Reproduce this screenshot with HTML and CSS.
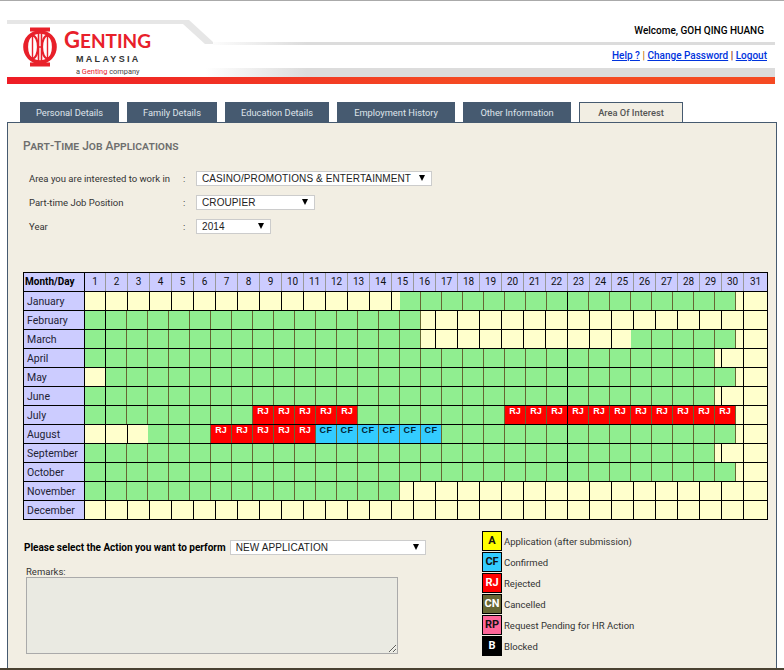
FILE: index.html
```html
<!DOCTYPE html>
<html lang="en">
<head>
  <meta charset="UTF-8">
  <meta name="viewport" content="width=device-width, initial-scale=1.0">
  <title>Part-Time Job Applications</title>
  <link rel="stylesheet" href="styles.css">
</head>
<body>
  <header class="masthead">
    <svg class="swoosh" width="768" height="76" viewBox="0 0 768 76" aria-hidden="true">
      <defs>
        <linearGradient id="fade" gradientUnits="userSpaceOnUse" x1="198" y1="0" x2="300" y2="0">
          <stop offset="0" stop-color="#fff"/>
          <stop offset="1" stop-color="#dcdcdc"/>
        </linearGradient>
      </defs>
      <polygon points="0,19 182,19 206,41 206,43 198,43 176,23 0,23" fill="#e6e6e6"/>
      <rect x="206" y="41" width="562" height="3" fill="url(#fade)"/>
      <rect x="198" y="67" width="570" height="9" fill="url(#fade)"/>
    </svg>
    <div class="masthead-top">
      <div class="logo">
        <svg class="logo-mark" width="36" height="40" viewBox="0 0 36 40" aria-hidden="true">
          <g fill="none" stroke="#e8202a">
            <circle cx="18" cy="20" r="15" stroke-width="3.600"/>
            <ellipse cx="10.500" cy="20" rx="5.500" ry="11.500" stroke-width="2.200"/>
            <ellipse cx="25.500" cy="20" rx="5.500" ry="11.500" stroke-width="2.200"/>
            <path d="M10.500 9v22M25.500 9v22" stroke-width="1.400"/>
            <path d="M16.500 6v28M19.500 6v28M16 20h4" stroke-width="1.600"/>
            <path d="M8 2.500h20M8 37.500h20" stroke-width="4"/>
          </g>
        </svg>
        <div class="logo-words">
          <div class="logo-name">GENTING</div>
          <div class="logo-sub">MALAYSIA</div>
          <div class="logo-tag">a <span>Genting</span> company</div>
        </div>
      </div>
      <div class="user">
        <div class="welcome">Welcome, GOH QING HUANG</div>
        <div class="user-links">
          <a href="#">Help ?</a> <span class="sep-a">|</span> <a href="#">Change Password</a> <span class="sep-b">|</span> <a href="#">Logout</a>
        </div>
      </div>
    </div>
    <div class="redbar"></div>
  </header>

  <nav class="tabs">
    <a href="#" class="tab">Personal Details</a>
    <a href="#" class="tab">Family Details</a>
    <a href="#" class="tab">Education Details</a>
    <a href="#" class="tab">Employment History</a>
    <a href="#" class="tab">Other Information</a>
    <a href="#" class="tab active">Area Of Interest</a>
  </nav>

  <main class="panel">
    <h2>Part-Time Job Applications</h2>

    <div class="fields">
      <label>Area you are interested to work in</label><span>:</span>
      <div class="pick pick-area"><select><option>CASINO/PROMOTIONS &amp; ENTERTAINMENT</option></select></div>
      <label>Part-time Job Position</label><span>:</span>
      <div class="pick pick-job"><select><option>CROUPIER</option></select></div>
      <label>Year</label><span>:</span>
      <div class="pick pick-year"><select><option>2014</option></select></div>
    </div>

    <div class="calendar" id="calendar"></div>

    <div class="foot">
      <div class="action">
        <div class="action-row">
          <b>Please select the Action you want to perform</b>
          <div class="pick pick-action"><select><option>NEW APPLICATION</option></select></div>
        </div>
        <label class="remarks-label">Remarks:</label>
        <textarea class="remarks" readonly></textarea>
      </div>
      <ul class="legend">
        <li><span class="key key-a">A</span>Application (after submission)</li>
        <li><span class="key key-cf">CF</span>Confirmed</li>
        <li><span class="key key-rj">RJ</span>Rejected</li>
        <li><span class="key key-cn">CN</span>Cancelled</li>
        <li><span class="key key-rp">RP</span>Request Pending for HR Action</li>
        <li><span class="key key-b">B</span>Blocked</li>
      </ul>
    </div>
  </main>
  <div class="bottom-strip"></div>
  <script src="grid.js"></script>
</body>
</html>
```

FILE: styles.css
```css
* {
  box-sizing: border-box;
}
html, body {
  height: 670px;
  overflow: hidden;
}
body {
  margin: 0;
  background: #fff;
  border-top: 1px solid #aaa;
  font-family: Roboto, Arial, sans-serif;
  font-size: 9.5px;
  color: #333;
}

/* header */
.masthead {
  position: relative;
  width: 768px;
  height: 83px;
  margin-left: 7px;
}
.swoosh {
  position: absolute;
  left: 0;
  top: 0;
}
.masthead-top {
  position: relative;
  height: 76px;
  display: flex;
  justify-content: space-between;
}
.logo {
  display: flex;
  padding: 26px 0 0 15px;
  height: 76px;
}
.logo-mark {
  margin-right: 6px;
}
.logo-words {
  padding-top: 3px;
}
.logo-name {
  font-family: Lato, Arial, sans-serif;
  font-weight: bold;
  font-size: 19px;
  line-height: 20px;
  color: #e8202a;
}
.logo-name::first-letter {
  font-size: 22px;
}
.logo-sub {
  font-family: 'Liberation Sans', Arial, sans-serif;
  font-weight: bold;
  font-size: 9px;
  letter-spacing: 2.3px;
  color: #333;
  margin: 3px 0 0 12px;
  line-height: 10px;
}
.logo-tag {
  font-size: 7.400px;
  margin: 3px 0 0 12px;
  line-height: 10px;
  color: #444;
}
.logo-tag span {
  color: #e8202a;
}
.user {
  width: 200px;
  text-align: right;
  padding: 23px 8px 0 0;
  font-size: 10px;
}
.welcome {
  font-weight: 500;
  color: #000;
  line-height: 14px;
  padding-right: 3px;
}
.user-links {
  margin-top: 11px;
  line-height: 14px;
  font-weight: 500;
}
.user-links a {
  color: #0033dd;
}
.sep-a {
  color: #c07000;
}
.sep-b {
  color: #800000;
}
.redbar {
  height: 7px;
  background: linear-gradient(to right, #ee1c25, #f54a23 60%);
}

/* tabs */
.tabs {
  display: grid;
  grid-template-columns: 99px 90px 104px 118px 108px 104px;
  column-gap: 8px;
  margin: 18px 0 0 20px;
}
.tab {
  height: 20px;
  line-height: 21px;
  text-align: center;
  text-decoration: none;
  font-size: 9.300px;
  background: #465a70;
  color: #dfe4ea;
}
.tab.active {
  background: #f2eee3;
  color: #555;
  font-weight: 500;
  border: 1px solid #465a70;
  border-bottom: 0;
  line-height: 19px;
}

/* panel */
.panel {
  width: 770px;
  height: 546px;
  margin-left: 7px;
  padding: 0 0 0 15px;
  background: #f2eee3;
  border: 1px solid #465a70;
  border-width: 1px 1px 0 1px;
}
h2 {
  margin: 0;
  padding-top: 15px;
  font-size: 12px;
  line-height: 16px;
  font-weight: 500;
  font-variant: small-caps;
  color: #6e6e6e;
}
.fields {
  display: grid;
  grid-template-columns: 154px 13px 1fr;
  grid-auto-rows: 15px;
  row-gap: 9px;
  align-items: center;
  margin: 17px 0 0 6px;
}
.fields label {
  white-space: nowrap;
}
.pick {
  position: relative;
  height: 15px;
}
.pick select {
  appearance: none;
  display: block;
  width: 100%;
  height: 100%;
  padding: 0 0 0 5px;
  border: 1px solid #ccc;
  border-radius: 0;
  background: #fff;
  color: #222;
  font-family: 'Liberation Sans', Arial, sans-serif;
  font-size: 10px;
  letter-spacing: 0.1px;
}
.pick::after {
  content: '';
  position: absolute;
  right: 7px;
  top: 4px;
  border-style: solid;
  border-width: 6px 3.5px 0 3.5px;
  border-color: #000 transparent transparent transparent;
}
.pick-area {
  width: 236px;
}
.pick-job {
  width: 119px;
}
.pick-year {
  width: 75px;
}
.pick-action {
  width: 196px;
}

/* calendar */
.calendar {
  width: 745px;
  margin-top: 38px;
  border-top: 1px solid #000;
  border-left: 1px solid #000;
  border-right: 1px solid #000;
  color: #111;
}
.cal-row {
  display: flex;
  height: 19px;
  border-bottom: 1px solid #000;
}
.cal-month {
  width: 61px;
  flex: none;
  padding-left: 3px;
  font-size: 10.500px;
  line-height: 20px;
  background: #ccccff;
  border-right: 1px solid #000;
  color: #223;
}
.cal-head .cal-month {
  font-size: 10px;
  font-weight: bold;
  padding-left: 1px;
  color: #000;
  line-height: 17px;
}
.cell {
  flex: none;
  height: 18px;
  border-right: 1px solid #000;
  text-align: center;
  font-family: 'Liberation Sans', Arial, sans-serif;
  font-weight: bold;
  font-size: 9px;
  line-height: 10px;
}
.cell.free {
  background: #ffffcc;
}
.cell.blank {
  border-right: 0;
}
.cell.open {
  background: #90ee90;
  border-right-color: #666633;
}
.cell.rj {
  background: #ff0000;
  border-right-color: #666633;
  color: #fff;
}
.cell.cf {
  background: #33ccff;
  border-right-color: #666633;
  color: #023;
  letter-spacing: 0.5px;
}
.cell.edge {
  border-right-color: #000;
}
.cell.day {
  background: #ccccff;
  border-right-color: #999;
  font-family: Roboto, Arial, sans-serif;
  font-weight: normal;
  font-size: 10px;
  line-height: 17px;
  color: #111;
}
.cell.last {
  border-right: 0;
}

/* bottom part */
.foot {
  display: flex;
  margin-top: 11px;
}
.action {
  width: 459px;
  padding: 9px 0 0 1px;
}
.action-row {
  display: flex;
  align-items: center;
}
.action-row b {
  color: #000;
  margin-right: 4px;
  font-size: 10px;
  font-weight: bold;
  white-space: nowrap;
}
.remarks-label {
  display: block;
  margin: 12px 0 0 2px;
  line-height: 10px;
}
.remarks {
  display: block;
  width: 372px;
  height: 77px;
  margin: 0 0 0 2px;
  background: #eaeae2;
  border: 1px solid #aaa;
  outline: 0;
}
.legend {
  list-style: none;
  margin: 0;
  padding: 0;
}
.legend li {
  display: flex;
  align-items: center;
  height: 20px;
  margin-bottom: 1px;
}
.key {
  width: 20px;
  height: 20px;
  margin-right: 2px;
  border: 1px solid #000;
  text-align: center;
  font-size: 11px;
  font-weight: bold;
  line-height: 18px;
  color: #111;
}
.key-a { background: #ffff00; }
.key-cf { background: #33ccff; }
.key-rj { background: #ff0000; color: #fff; }
.key-cn { background: #666633; color: #fff; }
.key-rp { background: #ff6699; }
.key-b { background: #000; color: #fff; }

.bottom-strip {
  height: 2px;
  background: #4a4232;
}
```

FILE: grid.js
```js
// one row per month: [kind, count]
// y = free cell (runs up to the next grid line), f = yellow gap of given width
// g = open, r = rejected, c = confirmed
const months = [
  ['January', [['y', 14], ['f', 8], ['g', 16], ['y', 2]]],
  ['February', [['g', 16], ['y', 16]]],
  ['March', [['g', 16], ['y', 9], ['f', 19], ['g', 5], ['y', 2]]],
  ['April', [['g', 30], ['y', 3]]],
  ['May', [['y', 1], ['g', 30], ['y', 2]]],
  ['June', [['g', 30], ['y', 3]]],
  ['July', [['g', 8], ['r', 5], ['g', 7], ['r', 11], ['y', 2]]],
  ['August', [['y', 2], ['f', 20], ['g', 3], ['r', 5], ['c', 6], ['g', 14], ['y', 2]]],
  ['September', [['g', 30], ['y', 3]]],
  ['October', [['g', 31], ['y', 2]]],
  ['November', [['g', 15], ['y', 17]]],
  ['December', [['y', 31]]]
];

const START = 85, END = 767;
const calendar = document.getElementById('calendar');

function addCell(row, cls, width, text) {
  const cell = document.createElement('div');
  cell.className = 'cell ' + cls;
  cell.style.width = width + 'px';
  if (text) cell.textContent = text;
  row.appendChild(cell);
}

function nextLine(x) {
  if (x < 106) return 106;
  const line = 106 + (Math.floor((x - 106) / 22) + 1) * 22;
  return line > 744 ? END : line;
}

function newRow(label, extra) {
  const row = document.createElement('div');
  row.className = 'cal-row ' + extra;
  const month = document.createElement('div');
  month.className = 'cal-month';
  month.textContent = label;
  row.appendChild(month);
  calendar.appendChild(row);
  return row;
}

const head = newRow('Month/Day', 'cal-head');
for (let d = 1, x = START; d <= 31; d++) {
  const to = nextLine(x);
  addCell(head, 'day' + (to === END ? ' last' : ''), to - x, String(d));
  x = to;
}

const kinds = { g: ['open', ''], r: ['rj', 'RJ'], c: ['cf', 'CF'] };

months.forEach(([name, runs]) => {
  const row = newRow(name, '');
  let x = START;
  runs.forEach(([kind, count]) => {
    if (kind === 'f') {
      addCell(row, 'free blank', count);
      x += count;
      return;
    }
    for (let i = 0; i < count && x < END; i++) {
      if (kind === 'y') {
        const to = nextLine(x);
        addCell(row, 'free' + (to === END ? ' last' : ''), to - x);
        x = to;
      } else {
        const to = x + 21;
        // grid lines that show through the coloured cells
        const edge = to === 106 || to === 568 ? ' edge' : '';
        addCell(row, kinds[kind][0] + edge, 21, kinds[kind][1]);
        x = to;
      }
    }
  });
});
```
